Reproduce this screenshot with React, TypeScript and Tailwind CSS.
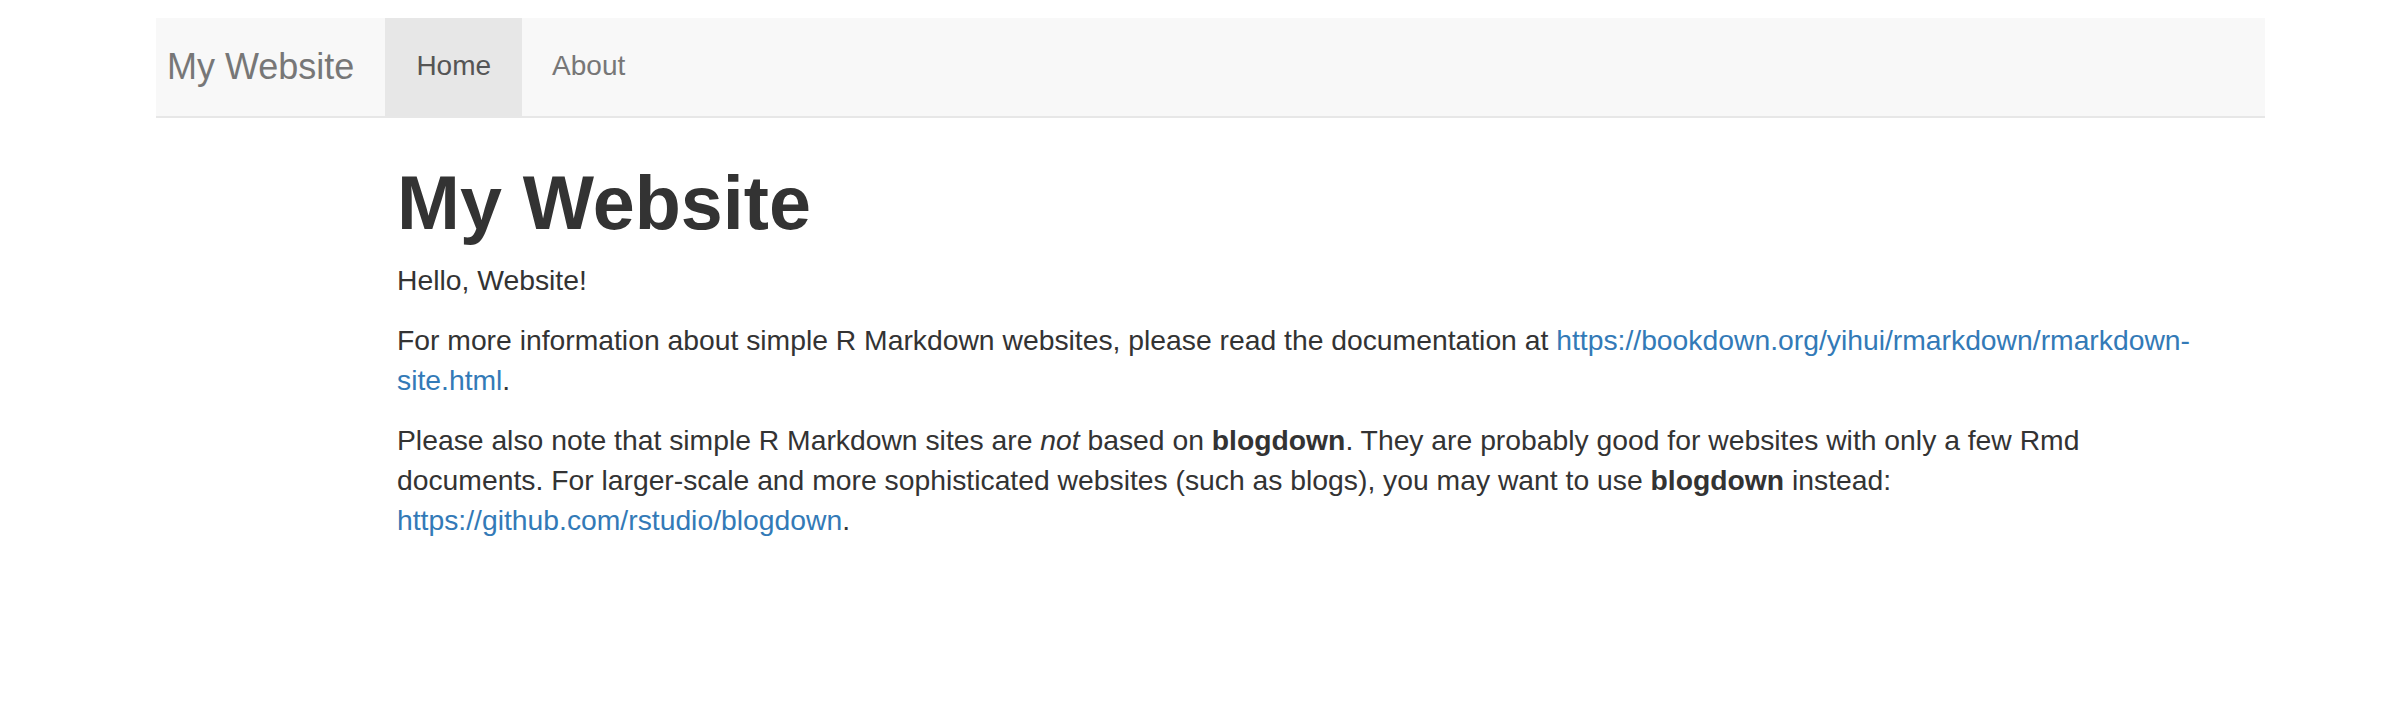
export default function App() {
  return (
    <div className="min-h-[716px] bg-white font-['Liberation_Sans',Arial,sans-serif] text-[#333333]">
      {/* Navbar */}
      <div className="pt-[18px]">
        <nav className="ml-[156px] flex w-[2109px] border-b-2 border-[#e7e7e7] bg-[#f8f8f8]">
          <a href="#" className="pl-[11px] pr-[31px] pt-[29px] pb-[29px] text-[36px] leading-[40px] text-[#777777]">
            My Website
          </a>
          <a href="#" className="bg-[#e7e7e7] px-[31px] pt-[28px] pb-[30px] text-[28px] leading-[40px] text-[#555555]">
            Home
          </a>
          <a href="#" className="px-[30px] pt-[28px] pb-[30px] text-[28px] leading-[40px] text-[#777777]">
            About
          </a>
        </nav>
      </div>

      {/* Main content */}
      <div className="ml-[397px] w-[1820px] text-[28.3px] leading-[40px]">
        <h1 className="mt-[43px] mb-[15px] text-[75.5px] font-bold leading-[84px]">My Website</h1>
        <p className="mb-[20px]">Hello, Website!</p>
        <p className="mb-[20px]">
          For more information about simple R Markdown websites, please read the documentation at{" "}
          <a href="#" className="text-[#337ab7]">
            https://bookdown.org/yihui/rmarkdown/rmarkdown-site.html
          </a>
          .
        </p>
        <p className="mb-[20px]">
          Please also note that simple R Markdown sites are <em>not</em> based on <strong>blogdown</strong>. They are
          probably good for websites with only a few Rmd documents. For larger-scale and more sophisticated websites
          (such as blogs), you may want to use <strong>blogdown</strong> instead:{" "}
          <a href="#" className="text-[#337ab7]">
            https://github.com/rstudio/blogdown
          </a>
          .
        </p>
      </div>
    </div>
  );
}
